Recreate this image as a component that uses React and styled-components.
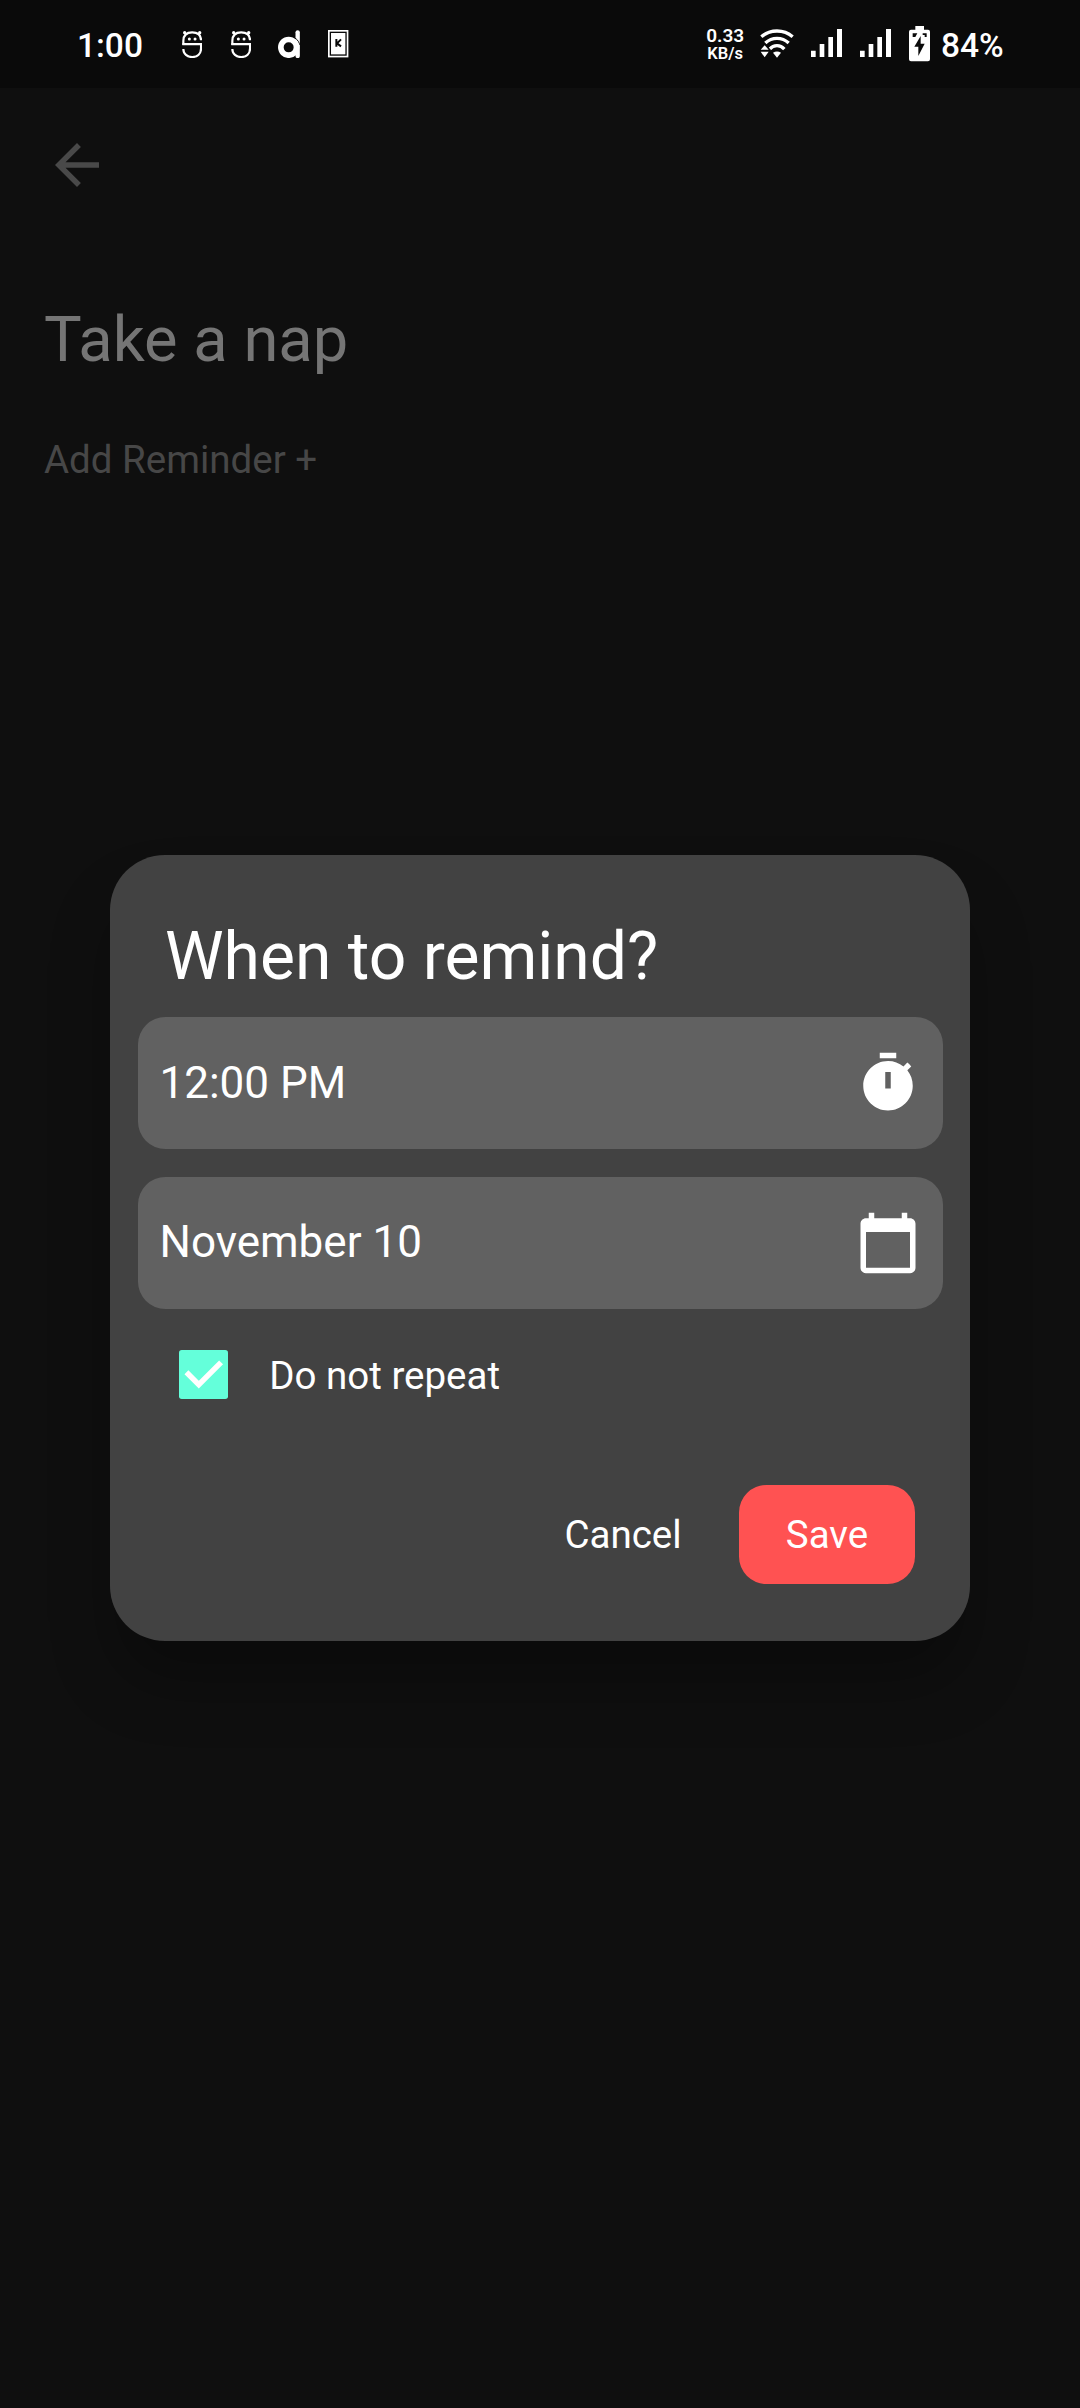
import React, { useState } from "react";
import styled, { createGlobalStyle } from "styled-components";

const GlobalStyle = createGlobalStyle`
  * { box-sizing: border-box; }
  body { margin: 0; background: #0f0f0f; }
`;

const Screen = styled.div`
  width: 1080px;
  height: 2408px;
  display: flex;
  flex-direction: column;
  overflow: hidden;
  background: #0f0f0f;
  color: #fff;
  font-family: Roboto, "Liberation Sans", sans-serif;
`;

const StatusBar = styled.header`
  height: 88px;
  flex: none;
  display: flex;
  justify-content: space-between;
  padding: 0 77px;
  background: #0a0a0a;
`;

const StatusGroup = styled.div`
  display: flex;
  align-items: center;
`;

const StatusText = styled.span`
  font-size: 33.5px;
  font-weight: 500;
  line-height: 40px;
  width: ${(p) => p.$width}px;
  margin: 4px 0 0 ${(p) => p.$gap || 0}px;
  white-space: nowrap;
`;

const NetSpeed = styled.div`
  width: 40px;
  display: flex;
  flex-direction: column;
  align-items: center;
  font-weight: 600;
  line-height: 18.5px;
  font-size: 16.5px;
  margin: 2px 15px 0 0;
`;

const SpeedValue = styled.span`
  font-size: 19px;
`;

const StatusIcon = styled.svg`
  display: block;
  flex: none;
  margin: 0 0 ${(p) => p.$lift || 0}px ${(p) => p.$gap || 0}px;
`;

const Body = styled.main`
  position: relative;
  flex: 1;
  display: flex;
  flex-direction: column;
`;

const AppBar = styled.nav`
  height: 154px;
  display: flex;
  align-items: center;
  padding: 0 44px;
  color: #494949;
`;

const Task = styled.section`
  display: flex;
  flex-direction: column;
  align-items: flex-start;
  gap: 61px;
  padding: 60px 44px 0;
`;

const TaskTitle = styled.h1`
  margin: 0;
  font-size: 63.25px;
  line-height: 74px;
  font-weight: 400;
  color: #757575;
`;

const AddReminder = styled.span`
  font-size: 38.5px;
  line-height: 45px;
  color: #474747;
`;

const Overlay = styled.div`
  position: absolute;
  inset: 0;
  display: flex;
  align-items: center;
  justify-content: center;
`;

const Dialog = styled.div`
  width: 860px;
  height: 786.5px;
  padding: 61.75px 27.5px 0;
  border-radius: 55px;
  background: #424242;
  box-shadow: 0 44px 66px -6px rgba(0, 0, 0, 0.3);
`;

const DialogTitle = styled.h2`
  margin: 0 27.5px 20.5px;
  font-size: 66px;
  line-height: 80px;
  font-weight: 400;
`;

const Fields = styled.div`
  display: flex;
  flex-direction: column;
  gap: 27.5px;
`;

const Field = styled.div`
  height: 132px;
  display: flex;
  align-items: center;
  justify-content: space-between;
  padding: 0 22px;
  border-radius: 27.5px;
  background: #616161;
  font-size: 44px;
  line-height: 53px;
`;

const Icon = styled.svg`
  display: block;
  width: 66px;
  height: 66px;
  fill: currentColor;
`;

const RepeatRow = styled.div`
  height: 132px;
  display: flex;
  align-items: center;
  gap: 41px;
  padding-left: 41.25px;
  font-size: 38.5px;
  line-height: 46px;
`;

const RepeatLabel = styled.span`
  margin-top: 2px;
`;

const CheckBox = styled.button`
  width: 49.5px;
  height: 49.5px;
  padding: 0;
  border: 0;
  border-radius: 2.75px;
  background: #64ffda;
`;

const CheckMark = styled.svg`
  display: block;
  width: 49.5px;
  height: 49.5px;
  fill: none;
  stroke: #fff;
  stroke-width: 2;
`;

const Actions = styled.div`
  display: flex;
  justify-content: flex-end;
  align-items: center;
  gap: 26px;
  margin: 44px 27.5px 0 0;
`;

const ActionButton = styled.button`
  width: ${(p) => p.$width}px;
  height: 99px;
  padding: 2px 0 0;
  border: 0;
  border-radius: 27.5px;
  background: ${(p) => p.$background || "transparent"};
  color: #fff;
  font: 400 38.5px/46px Roboto, "Liberation Sans", sans-serif;
`;

const FaceIcon = ({ gap }) => (
  <StatusIcon $gap={gap} width="20.4" height="28.4" viewBox="0 0 61 85" fill="none" stroke="#fff" strokeWidth="6.5">
    <path d="M4 45V33C4 15 14 7 30.500 7S57 15 57 31" />
    <path d="M1 42.500H57V55C57 72 45 81 30.500 81S4 72 4 57" />
    <circle cx="8" cy="8" r="5" fill="#fff" stroke="none" />
    <circle cx="53" cy="8" r="5" fill="#fff" stroke="none" />
    <circle cx="22" cy="27" r="4.500" fill="#fff" stroke="none" />
    <circle cx="39" cy="27" r="4.500" fill="#fff" stroke="none" />
  </StatusIcon>
);

const LetterIcon = () => (
  <StatusIcon $gap={26.7} width="22" height="28.4" viewBox="0 0 66 85" fill="none">
    <path d="M59 7V78" stroke="#fff" strokeWidth="13" strokeLinecap="round" />
    <path d="M41 20A33 33 0 0 1 65 44" stroke="#0a0a0a" strokeWidth="3" />
    <circle cx="32" cy="52" r="23.500" stroke="#fff" strokeWidth="17" />
  </StatusIcon>
);

const CardIcon = () => (
  <StatusIcon $gap={28.7} width="20.4" height="27.4" viewBox="0 0 61 82" fill="none">
    <rect width="61" height="82" fill="#fff" />
    <rect x="7" y="7" width="47" height="68" stroke="#0a0a0a" strokeWidth="4" />
    <path d="M25 27V50M39 28L27 40L39 49" stroke="#0a0a0a" strokeWidth="6" />
  </StatusIcon>
);

const WifiIcon = () => (
  <StatusIcon $lift={1.5} width="34" height="28.7" viewBox="0 0 102 86" fill="none" stroke="#fff" strokeWidth="10">
    <path d="M4 23Q24 6 51 6T98 23" />
    <path d="M16 42Q31 28 51 28T86 42" />
    <path d="M29 60Q38 50 51 50T73 60" />
    <path d="M39 71Q51 64 63 71L51 86Z" fill="#fff" stroke="none" />
    <path d="M14 45L29 62H0Z" fill="#0a0a0a" stroke="#0a0a0a" strokeWidth="4" />
    <path d="M14 49L26 62H2ZM2 68H26L14 85Z" fill="#fff" stroke="none" />
  </StatusIcon>
);

const SignalIcon = ({ gap }) => (
  <StatusIcon $lift={1.5} $gap={gap} width="31" height="28" viewBox="0 0 93 84" fill="#fff">
    <path d="M0 65H14V84H0ZM26 45H40V84H26ZM52 24H66V84H52ZM78 0H93V84H78Z" />
  </StatusIcon>
);

const BatteryIcon = () => (
  <StatusIcon $gap={18} width="21" height="35.4" viewBox="0 0 63 106">
    <path fill="#fff" d="M19 0H45V11H57Q63 11 63 17V100Q63 106 57 106H6Q0 106 0 100V17Q0 11 6 11H19Z" />
    <path fill="#0a0a0a" d="M11 22H25L19 33H11ZM41 22H53V33H47V27H41ZM35 30L16 62H28V90L47 53H35Z" />
  </StatusIcon>
);

export default function App() {
  const [single, setSingle] = useState(true);
  return (
    <>
      <GlobalStyle />
      <Screen>
        <StatusBar>
          <StatusGroup>
            <StatusText $width={105}>1:00</StatusText>
            <FaceIcon />
            <FaceIcon gap={28.3} />
            <LetterIcon />
            <CardIcon />
          </StatusGroup>
          <StatusGroup>
            <NetSpeed>
              <SpeedValue>0.33</SpeedValue>
              <span>KB/s</span>
            </NetSpeed>
            <WifiIcon />
            <SignalIcon gap={16.5} />
            <SignalIcon gap={18.3} />
            <BatteryIcon />
            <StatusText $width={62} $gap={11}>
              84%
            </StatusText>
          </StatusGroup>
        </StatusBar>
        <Body>
          <AppBar>
            <Icon viewBox="0 0 24 24">
              <path d="M20 11H7.830l5.590-5.590L12 4l-8 8 8 8 1.410-1.410L7.830 13H20v-2z" />
            </Icon>
          </AppBar>
          <Task>
            <TaskTitle>Take a nap</TaskTitle>
            <AddReminder>Add Reminder +</AddReminder>
          </Task>
          <Overlay>
            <Dialog role="dialog">
              <DialogTitle>When to remind?</DialogTitle>
              <Fields>
                <Field>
                  <span>12:00 PM</span>
                  <Icon viewBox="0 0 24 24">
                    <path
                      fillRule="evenodd"
                      d="M15 1H9v2h6V1zm-4 13h2V8h-2v6zm8.030-6.610l1.420-1.420c-.43-.51-.9-.99-1.410-1.410l-1.420 1.420C16.070 4.740 14.120 4 12 4c-4.970 0-9 4.030-9 9s4.020 9 9 9 9-4.030 9-9c0-2.120-.74-4.070-1.970-5.610z"
                    />
                  </Icon>
                </Field>
                <Field>
                  <span>November 10</span>
                  <Icon viewBox="0 0 24 24">
                    <path d="M20 3h-1V1h-2v2H7V1H5v2H4c-1.100 0-2 .9-2 2v16c0 1.100.9 2 2 2h16c1.100 0 2-.9 2-2V5c0-1.100-.9-2-2-2zm0 18H4V8h16v13z" />
                  </Icon>
                </Field>
              </Fields>
              <RepeatRow>
                <CheckBox role="checkbox" aria-checked={single} onClick={() => setSingle(!single)}>
                  {single && (
                    <CheckMark viewBox="0 0 18 18">
                      <path d="M2.700 8.100L7.200 12.600L15.300 4.500" />
                    </CheckMark>
                  )}
                </CheckBox>
                <RepeatLabel>Do not repeat</RepeatLabel>
              </RepeatRow>
              <Actions>
                <ActionButton $width={180}>Cancel</ActionButton>
                <ActionButton $width={176} $background="#ff5252">
                  Save
                </ActionButton>
              </Actions>
            </Dialog>
          </Overlay>
        </Body>
      </Screen>
    </>
  );
}
